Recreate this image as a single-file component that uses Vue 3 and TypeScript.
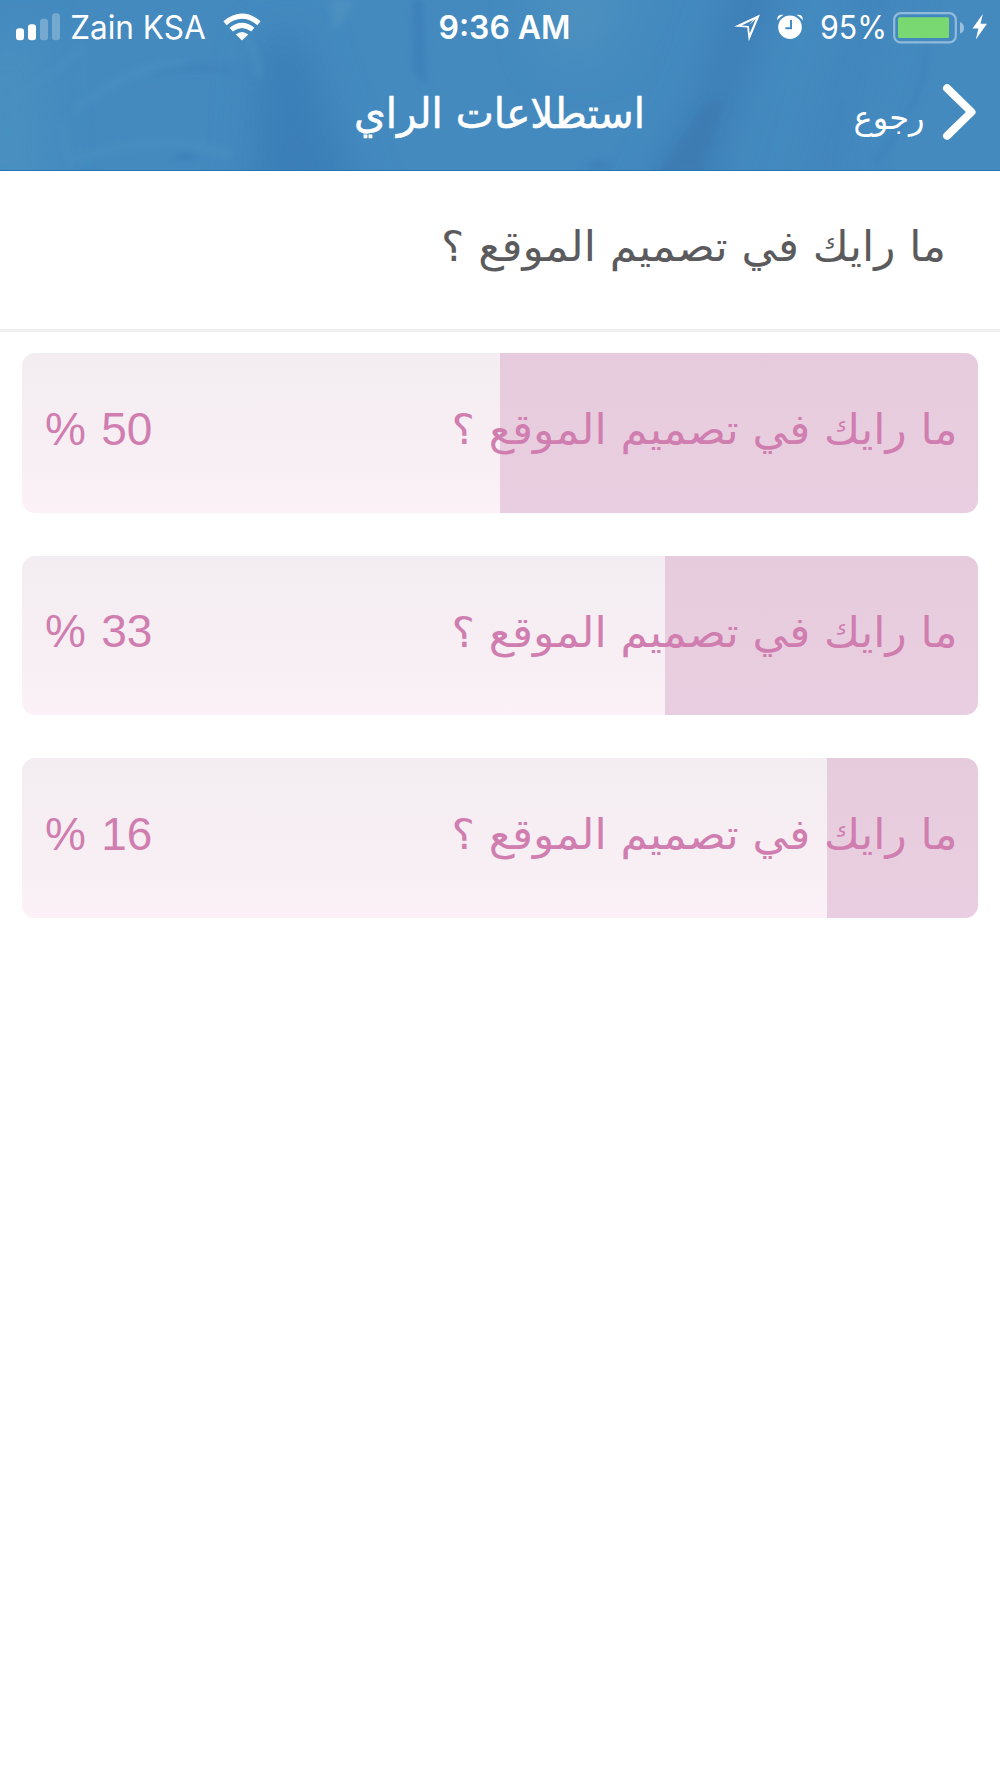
<script setup lang="ts">
interface Answer {
  label: string
  percent: number
  fill: number
}

const question = 'ما رايك في تصميم الموقع ؟'

const answers: Answer[] = [
  { label: question, percent: 50, fill: 50.05 },
  { label: question, percent: 33, fill: 32.75 },
  { label: question, percent: 16, fill: 15.75 },
]
</script>

<template>
  <main class="screen">
    <header class="header">
      <svg class="folds" viewBox="0 0 1000 170" preserveAspectRatio="none" aria-hidden="true">
        <defs>
          <filter id="soft" filterUnits="userSpaceOnUse" x="-100" y="-100" width="1200" height="370">
            <feGaussianBlur stdDeviation="20" />
          </filter>
          <filter id="crease" filterUnits="userSpaceOnUse" x="-50" y="-50" width="1100" height="270">
            <feGaussianBlur stdDeviation="3.5" />
          </filter>
        </defs>
        <rect width="1000" height="170" fill="#448abf" />
        <g filter="url(#soft)">
          <path d="M262 40 250 210H365L320 90 300 30Z" fill="#3a7fb8" />
          <path d="M745 -40H785L745 65 700 210H640L700 95Z" fill="#3a7cb5" />
          <path d="M875 -40H905L860 80 830 210H800L835 80Z" fill="#3f83bb" />
          <path d="M-30 50 40 30 50 200H-30Z" fill="#4a90c0" />
          <path d="M530 -20H640L600 60H550Z" fill="#4c90bf" />
        </g>
        <g filter="url(#crease)">
          <path d="M412 0 423 0 426 85 414 72Z" fill="#3d81ba" />
          <path d="M330 0 355 0 342 24 333 30Z" fill="#4b90bf" />
          <path d="M658 175 705 104 725 100 700 175Z" fill="#3c7cb3" />
          <path d="M150 75Q195 61 235 72 190 66 150 75Z" fill="#397db6" stroke="#3c80b8" stroke-width="2" />
          <path d="M170 157Q187 153 202 157 187 161 170 157Z" fill="#3579b3" />
          <path d="M928 45Q924 90 897 132L873 168" fill="none" stroke="#3d81bb" stroke-width="4" />
          <path d="M84 45V90M62 120 70 168M0 108Q50 75 82 50" fill="none" stroke="#4b90c1" stroke-width="3" />
          <path d="M75 110Q130 65 185 63M75 160Q160 130 230 155" fill="none" stroke="#498fc0" stroke-width="6" />
          <path d="M240 30Q262 55 257 78" fill="none" stroke="#488dc0" stroke-width="5" />
          <path d="M585 168Q597 155 614 168Z" fill="#3a7bb5" />
        </g>
      </svg>

      <div class="status">
        <div class="side">
          <svg class="signal" width="46" height="28" viewBox="0 0 46 28" aria-hidden="true">
            <rect x="1" y="15.3" width="8" height="12" rx="3" fill="#fff" />
            <rect x="13" y="11.3" width="8" height="16" rx="3" fill="#fff" />
            <rect x="25" y="5.8" width="8" height="21.5" rx="3" fill="#fff" opacity=".26" />
            <rect x="37" y="0.3" width="8" height="27" rx="3" fill="#fff" opacity=".26" />
          </svg>
          <svg class="carrier" width="140" height="40" viewBox="0 0 140 40">
            <text x="1.2" y="26.3" font-size="32.3" textLength="135.5" lengthAdjust="spacingAndGlyphs">Zain KSA</text>
          </svg>
          <svg class="wifi" width="38" height="28" viewBox="0 0 38 28" aria-hidden="true">
            <g fill="none" stroke="#fff" stroke-width="5">
              <path d="M2 10.2Q19 -3.8 36 10.2" />
              <path d="M8.2 16.6Q19 8 29.8 16.6" />
            </g>
            <path d="M12.8 21.6Q19 16.3 25.2 21.6L19 27.6Z" fill="#fff" />
          </svg>
        </div>

        <svg class="clock" width="140" height="40" viewBox="0 0 140 40">
          <text x="4.5" y="26.3" font-size="32.3" font-weight="600" textLength="132" lengthAdjust="spacingAndGlyphs">9:36 AM</text>
        </svg>

        <div class="side right">
          <svg class="location" width="28" height="28" viewBox="0 0 28 28" aria-hidden="true">
            <path fill-rule="evenodd" d="M1.3 13.6 27 1.6 15.8 28.2 14.2 14.4ZM8.6 12.6 15.9 12.9 16.7 20.4 22.8 5.9 16 12.2 20.2 6.9Z" fill="#fff" />
          </svg>
          <svg class="alarm" width="28" height="28" viewBox="0 0 28 28" aria-hidden="true">
            <circle cx="14" cy="14.2" r="11.8" fill="#fff" />
            <path d="M15 7V15.2H9.3" fill="none" stroke="#438abf" stroke-width="2" />
            <path d="M1.2 7.2Q.8 1 7.6 1.8 4.4 3.6 1.2 7.2ZM26.8 7.2Q27.2 1 20.4 1.8 23.6 3.6 26.8 7.2Z" fill="#fff" />
          </svg>
          <svg class="level" width="70" height="40" viewBox="0 0 70 40">
            <text x="1" y="26.3" font-size="32.3" textLength="67" lengthAdjust="spacingAndGlyphs">95%</text>
          </svg>
          <svg class="battery" width="72" height="32" viewBox="0 0 72 32" aria-hidden="true">
            <rect x="1.2" y="1.2" width="61.6" height="29.2" rx="6.5" fill="none" stroke="#fff" stroke-opacity=".42" stroke-width="2.2" />
            <rect x="5" y="5.3" width="51" height="20.7" rx="1.5" fill="#79d871" />
            <path d="M67 10Q71 11.5 71 16T67 21.5Z" fill="#fff" opacity=".46" />
          </svg>
          <svg class="bolt" width="16" height="26" viewBox="0 0 16 26" aria-hidden="true">
            <path d="M10.8 0 .5 14.5H6.4L3.8 25.5 15 9.8H8.6Z" fill="#fff" />
          </svg>
        </div>
      </div>

      <div class="nav">
        <svg class="title" width="298" height="70" viewBox="0 0 298 70">
          <text direction="rtl" x="294" y="43.5" font-size="42" textLength="291" lengthAdjust="spacingAndGlyphs">استطلاعات الراي</text>
        </svg>
        <div class="back">
          <svg width="76" height="60" viewBox="0 0 76 60">
            <text direction="rtl" x="71.5" y="45" font-size="33" textLength="71" lengthAdjust="spacingAndGlyphs">رجوع</text>
          </svg>
          <svg class="chevron" width="36" height="58" viewBox="0 0 36 58" aria-hidden="true">
            <path d="M5 5.2 29.5 29 5 52.8" fill="none" stroke="#fff" stroke-width="8" stroke-linecap="round" stroke-linejoin="round" />
          </svg>
        </div>
      </div>
    </header>

    <section class="question">
      <svg width="512" height="80" viewBox="0 0 512 80">
        <text direction="rtl" x="508" y="51" font-size="42" textLength="505" lengthAdjust="spacingAndGlyphs">{{ question }}</text>
      </svg>
    </section>

    <section class="answers">
      <div v-for="answer in answers" :key="answer.percent" class="answer">
        <div class="bar" :style="{ width: answer.fill + '%' }"></div>
        <span class="percent">% {{ answer.percent }}</span>
        <svg class="label" width="512" height="80" viewBox="0 0 512 80">
          <text direction="rtl" x="509.5" y="50.8" font-size="42" textLength="506" lengthAdjust="spacingAndGlyphs">{{ answer.label }}</text>
        </svg>
      </div>
    </section>
  </main>
</template>

<style>
body {
  margin: 0;
  background: #fff;
}
</style>

<style scoped>
.screen {
  width: 1000px;
  min-height: 1778px;
  background: #fff;
  font-family: "DejaVu Sans", sans-serif;
}
svg {
  display: block;
  flex: none;
  overflow: visible;
}
.header {
  position: relative;
  height: 170.5px;
  overflow: hidden;
  color: #fff;
  box-sizing: border-box;
}
.folds {
  position: absolute;
  inset: 0;
  width: 100%;
  height: 100%;
  border-bottom: 1px solid #2173b5;
  box-sizing: border-box;
  background: #448abf;
  overflow: hidden;
}
.status {
  position: relative;
  display: grid;
  grid-template-columns: 1fr 140px 1fr;
  height: 54px;
  padding: 0 12px 0 15px;
  align-items: start;
  font-family: Inter, sans-serif;
}
.status text,
.nav text {
  fill: #fff;
}
.side {
  display: flex;
  align-items: flex-start;
  padding-top: 13px;
}
.right {
  justify-content: flex-end;
}
.carrier {
  margin-left: 8px;
}
.wifi {
  margin-left: 14px;
}
.clock {
  margin-top: 13px;
  margin-left: 2px;
}
.alarm {
  margin-left: 15px;
}
.level {
  margin-left: 15px;
}
.battery {
  margin: -1px 0 0 4px;
}
.bolt {
  margin: 1px 0 0 7px;
}
.nav {
  position: relative;
  display: grid;
  grid-template-columns: 351px 298px 1fr;
  padding-top: 30px;
  padding-right: 22px;
}
.title {
  grid-column: 2;
}
.title text {
  stroke: #fff;
  stroke-width: 0.6px;
}
.back {
  display: flex;
  justify-content: flex-end;
  gap: 13px;
}
.chevron {
  margin-top: -1px;
}
.question {
  display: flex;
  justify-content: flex-end;
  height: 161.5px;
  box-sizing: border-box;
  padding: 39.5px 50px 0 0;
  border-bottom: 3px solid #eeeef3;
}
.question text {
  fill: #5b5b5d;
}
.answers {
  display: flex;
  flex-direction: column;
  gap: 43px;
  padding: 21px 22px 0;
}
.answer {
  position: relative;
  display: flex;
  align-items: center;
  justify-content: space-between;
  height: 159.6px;
  box-sizing: border-box;
  padding: 0 18px 0 23px;
  border-radius: 13px;
  overflow: hidden;
  background: linear-gradient(#f3edf1, #f6eef3 45%, #fbf1f7);
}
.bar {
  position: absolute;
  top: 0;
  right: 0;
  bottom: 0;
  background: linear-gradient(#e5cbdc, #e8cddf 45%, #e9cee1);
}
.percent {
  position: relative;
  margin-top: -8px;
  font: 46px "Liberation Sans", sans-serif;
  word-spacing: 2.5px;
  color: #d07db0;
}
.label {
  position: relative;
  margin-top: 1px;
}
.label text {
  fill: #d07db0;
}
</style>
